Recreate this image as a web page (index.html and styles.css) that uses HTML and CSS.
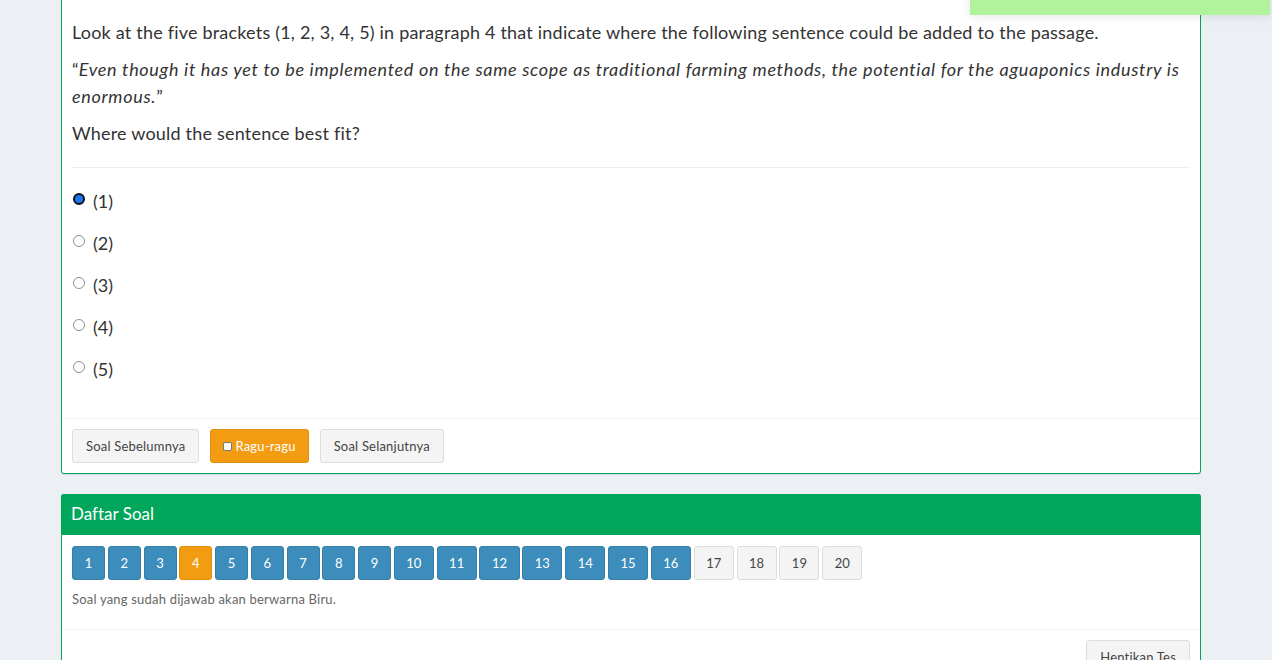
FILE: index.html
```html
<!DOCTYPE html>
<html>
<head>
<meta charset="utf-8">
<link rel="stylesheet" href="styles.css">
</head>
<body>
<div class="toast"></div>
<div class="wrap">
  <div class="box box-question">
    <div class="box-body">
      <div class="question">
        <p>Look at the five brackets (1, 2, 3, 4, 5) in paragraph 4 that indicate where the following sentence could be added to the passage.</p>
        <p>“<em>Even though it has yet to be implemented on the same scope as traditional farming methods, the potential for the aguaponics industry is enormous.</em>”</p>
        <p>Where would the sentence best fit?</p>
      </div>
      <hr class="sep">
      <div class="options">
        <label class="opt"><span class="radio checked"></span>(1)</label>
        <label class="opt"><span class="radio"></span>(2)</label>
        <label class="opt"><span class="radio"></span>(3)</label>
        <label class="opt"><span class="radio"></span>(4)</label>
        <label class="opt"><span class="radio"></span>(5)</label>
      </div>
    </div>
    <div class="box-footer">
      <button class="btn btn-default">Soal Sebelumnya</button>
      <button class="btn btn-warning"><span class="chk"></span>Ragu-ragu</button>
      <button class="btn btn-default">Soal Selanjutnya</button>
    </div>
  </div>

  <div class="box box-list">
    <div class="box-header">Daftar Soal</div>
    <div class="box-body list-body">
      <div class="nums">
        <button class="num blue">1</button>
        <button class="num blue">2</button>
        <button class="num blue">3</button>
        <button class="num orange">4</button>
        <button class="num blue">5</button>
        <button class="num blue">6</button>
        <button class="num blue">7</button>
        <button class="num blue">8</button>
        <button class="num blue">9</button>
        <button class="num blue">10</button>
        <button class="num blue">11</button>
        <button class="num blue">12</button>
        <button class="num blue">13</button>
        <button class="num blue">14</button>
        <button class="num blue">15</button>
        <button class="num blue">16</button>
        <button class="num grey">17</button>
        <button class="num grey">18</button>
        <button class="num grey">19</button>
        <button class="num grey">20</button>
      </div>
      <p class="hint">Soal yang sudah dijawab akan berwarna Biru.</p>
    </div>
    <div class="box-footer right">
      <button class="btn btn-default">Hentikan Tes</button>
    </div>
  </div>
</div>
</body>
</html>
```

FILE: styles.css
```css
html, body {
  margin: 0;
  padding: 0;
}
body {
  background: #ecf0f5;
  font-family: Lato, "Noto Sans", sans-serif;
  font-variant-ligatures: none;
  color: #333;
  overflow: hidden;
  height: 660px;
}
.toast {
  position: absolute;
  top: 0;
  left: 970px;
  width: 300px;
  height: 15px;
  background: #b1f29c;
  box-shadow: 0 0 12px rgba(0,0,0,0.12);
  z-index: 5;
}
.wrap {
  width: 1140px;
  margin-left: 61px;
}
.box {
  background: #fff;
  border: 1px solid #00a65a;
  border-radius: 3px;
  box-shadow: 0 1px 1px rgba(0,0,0,0.1);
}
.box-question {
  margin-top: -2px;
  border-top-left-radius: 0;
  border-top-right-radius: 0;
}
.box-body {
  padding: 10px;
}
.question {
  padding-top: 10px;
  font-size: 18px;
  line-height: 27px;
  letter-spacing: 0.2px;
  color: #333;
}
.question p {
  margin: 0 0 10px;
}
.question em {
  font-style: italic;
  letter-spacing: 0.68px;
}
.sep {
  border: 0;
  border-top: 1px solid #eee;
  margin: 20px 0 20px;
}
.options {
  display: flex;
  flex-direction: column;
  gap: 15px;
  padding-bottom: 25px;
}
.opt {
  display: flex;
  align-items: center;
  font-size: 18px;
  line-height: 27px;
  color: #333;
}
.radio {
  width: 12px;
  height: 12px;
  box-sizing: border-box;
  border: 1px solid #8f8f8f;
  border-radius: 50%;
  background: #fff;
  margin: 0 8px 0 1px;
  position: relative;
  top: -3px;
}
.radio.checked {
  border: 2px solid #111;
  background: #1a75f0;
}
.box-footer {
  border-top: 1px solid #f4f4f4;
  padding: 10px;
  display: flex;
  gap: 11px;
}
.box-footer.right {
  justify-content: flex-end;
}
.btn {
  font-family: Lato, "Noto Sans", sans-serif;
  font-size: 13px;
  letter-spacing: 0.2px;
  height: 34px;
  padding: 0 13px;
  border-radius: 3px;
  border: 1px solid #ddd;
  background: #f4f4f4;
  color: #444;
  display: inline-flex;
  align-items: center;
}
.btn-warning {
  background: #f39c12;
  border-color: #e08e0b;
  color: #fff;
  padding: 0 12px;
}
.chk {
  width: 9px;
  height: 9px;
  box-sizing: border-box;
  background: #fff;
  border: 1px solid #777;
  border-radius: 2px;
  margin-right: 3px;
}
.box-list {
  margin-top: 20px;
}
.box-header {
  background: #00a65a;
  color: #fff;
  font-size: 17px;
  height: 41px;
  line-height: 40px;
  padding: 0 10px;
  margin: -1px -1px 0;
  border-radius: 3px 3px 0 0;
}
.list-body {
  padding-top: 11px;
  padding-bottom: 20px;
}
.nums {
  display: flex;
  gap: 2.75px;
}
.num {
  font-family: Lato, "Noto Sans", sans-serif;
  font-size: 13px;
  height: 34px;
  min-width: 33px;
  box-sizing: border-box;
  padding: 0 11.5px;
  border-radius: 3px;
  border: 1px solid #ddd;
  color: #fff;
}
.num.blue {
  background: #3c8dbc;
  border-color: #367fa9;
}
.num.orange {
  background: #f39c12;
  border-color: #e08e0b;
}
.num.grey {
  background: #f4f4f4;
  color: #444;
}
.hint {
  margin: 9px 0 0;
  font-size: 13px;
  letter-spacing: 0.2px;
  line-height: 20px;
  color: #666;
}
```
